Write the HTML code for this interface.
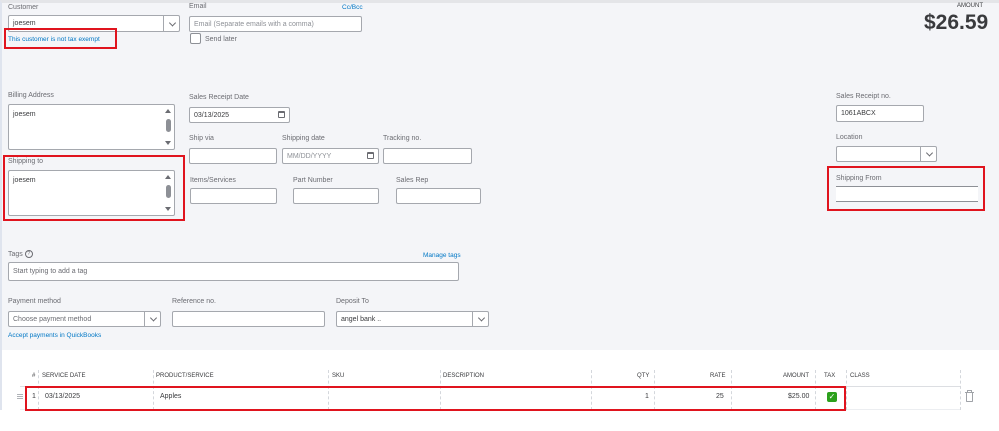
<!DOCTYPE html>
<html><head><meta charset="utf-8"><style>
*{box-sizing:border-box;margin:0;padding:0}
body{width:999px;height:431px;background:#fff;font-family:"Liberation Sans",sans-serif;position:relative;overflow:hidden;color:#393a3d}
.bg{position:absolute;left:0;top:0;width:999px;height:350px;background:#f4f5f8;border-top:3px solid #e4e5e8;border-left:2px solid #dfe4ee}
.a{position:absolute}
.l{position:absolute;font-size:7px;color:#6b6c72;white-space:nowrap}
.i{position:absolute;background:#fff;border:1px solid #a5a8ae;border-radius:2px;font-size:7px;color:#393a3d;padding:0 4px;display:flex;align-items:center}
.ph{color:#8d9096}
.sel::after{content:"";position:absolute;right:0;top:0;bottom:0;width:15px;border-left:1px solid #a5a8ae}
.chev{position:absolute;right:4px;top:50%;width:5px;height:5px;border-right:1px solid #6b6c72;border-bottom:1px solid #6b6c72;transform:translateY(-70%) rotate(45deg)}
.red{position:absolute;border:2px solid #e0141e}
.link{position:absolute;font-size:6.5px;color:#0077c5;white-space:nowrap}
.ta{position:absolute;background:#fff;border:1px solid #a5a8ae;border-radius:2px;font-size:7px;padding:6px 4px}
.sb{position:absolute;right:3px;width:5px;height:13px;background:#8d9096;border-radius:3px}
.up,.dn{position:absolute;right:3px;width:0;height:0;border-left:3px solid transparent;border-right:3px solid transparent}
.up{top:4px;border-bottom:4px solid #6b6c72}.dn{bottom:4px;border-top:4px solid #6b6c72}
.cal{position:absolute;right:4px;top:3px;width:7px;height:7px;border:1px solid #6b6c72;border-top-width:2px;border-radius:1px}
.th{position:absolute;top:373px;font-size:6px;color:#393a3d;white-space:nowrap}
.td{position:absolute;top:393px;font-size:7px;white-space:nowrap}
.vd{position:absolute;width:0;border-left:1px dashed #d4d7dc}
</style></head><body>
<div class="bg"></div>

<div class="l" style="left:8px;top:4px">Customer</div>
<div class="i sel" style="left:8px;top:15px;width:172px;height:17px">joesem<span class="chev"></span></div>
<div class="red" style="left:4px;top:28px;width:113px;height:21px"></div>
<div class="link" style="left:8px;top:36px">This customer is not tax exempt</div>

<div class="l" style="left:189px;top:3px">Email</div>
<div class="link" style="left:342px;top:4px">Cc/Bcc</div>
<div class="i" style="left:189px;top:16px;width:173px;height:16px"><span class="ph">Email (Separate emails with a comma)</span></div>
<div class="a" style="left:190px;top:33px;width:11px;height:11px;border:1px solid #8d9096;border-radius:2px;background:#fff"></div>
<div class="l" style="left:205px;top:36px">Send later</div>

<div class="a" style="left:957px;top:3px;font-size:6px;color:#393a3d">AMOUNT</div>
<div class="a" style="left:924px;top:11px;font-size:21px;font-weight:bold;color:#393a3d">$26.59</div>

<div class="l" style="left:8px;top:92px">Billing Address</div>
<div class="ta" style="left:8px;top:104px;width:167px;height:46px">joesem<span class="up"></span><span class="sb" style="top:14px"></span><span class="dn"></span></div>

<div class="red" style="left:3px;top:155px;width:182px;height:66px"></div>
<div class="l" style="left:8px;top:158px">Shipping to</div>
<div class="ta" style="left:8px;top:170px;width:167px;height:46px">joesem<span class="up"></span><span class="sb" style="top:14px"></span><span class="dn"></span></div>

<div class="l" style="left:189px;top:94px">Sales Receipt Date</div>
<div class="i" style="left:189px;top:107px;width:101px;height:16px">03/13/2025<span class="cal"></span></div>

<div class="l" style="left:189px;top:135px">Ship via</div>
<div class="i" style="left:189px;top:148px;width:88px;height:16px"></div>
<div class="l" style="left:282px;top:135px">Shipping date</div>
<div class="i" style="left:282px;top:148px;width:97px;height:16px"><span class="ph">MM/DD/YYYY</span><span class="cal"></span></div>
<div class="l" style="left:383px;top:135px">Tracking no.</div>
<div class="i" style="left:383px;top:148px;width:89px;height:16px"></div>

<div class="l" style="left:190px;top:177px">Items/Services</div>
<div class="i" style="left:190px;top:188px;width:87px;height:16px"></div>
<div class="l" style="left:293px;top:177px">Part Number</div>
<div class="i" style="left:293px;top:188px;width:86px;height:16px"></div>
<div class="l" style="left:396px;top:177px">Sales Rep</div>
<div class="i" style="left:396px;top:188px;width:85px;height:16px"></div>

<div class="l" style="left:836px;top:93px">Sales Receipt no.</div>
<div class="i" style="left:836px;top:105px;width:88px;height:17px">1061ABCX</div>
<div class="l" style="left:836px;top:134px">Location</div>
<div class="i sel" style="left:836px;top:146px;width:101px;height:16px"><span class="chev"></span></div>
<div class="red" style="left:827px;top:166px;width:158px;height:45px"></div>
<div class="l" style="left:836px;top:175px">Shipping From</div>
<div class="a" style="left:836px;top:186px;width:142px;height:16px;background:#fff;border-top:1px solid #8d9096;border-bottom:1px solid #8d9096"></div>

<div class="l" style="left:8px;top:250px">Tags <span style="display:inline-block;width:8px;height:8px;border:1px solid #6b6c72;border-radius:50%;font-size:5px;text-align:center;line-height:6px;vertical-align:middle">?</span></div>
<div class="link" style="left:423px;top:252px">Manage tags</div>
<div class="i" style="left:8px;top:262px;width:451px;height:19px"><span class="ph" style="color:#6b6c72">Start typing to add a tag</span></div>

<div class="l" style="left:8px;top:298px">Payment method</div>
<div class="i sel" style="left:8px;top:311px;width:153px;height:16px"><span style="color:#6b6c72">Choose payment method</span><span class="chev"></span></div>
<div class="l" style="left:172px;top:298px">Reference no.</div>
<div class="i" style="left:172px;top:311px;width:153px;height:16px"></div>
<div class="l" style="left:336px;top:298px">Deposit To</div>
<div class="i sel" style="left:336px;top:311px;width:153px;height:16px">angel bank ..<span class="chev"></span></div>
<div class="link" style="left:8px;top:332px">Accept payments in QuickBooks</div>

<div class="a" style="left:0;top:350px;width:2px;height:60px;background:#dfe4ee"></div>
<div class="a" style="left:20px;top:386px;width:940px;height:0;border-top:1px solid #dcdee2"></div>
<div class="a" style="left:20px;top:409px;width:940px;height:0;border-top:1px solid #eceef1"></div>
<div class="vd" style="left:38px;top:370px;height:40px"></div>
<div class="vd" style="left:153px;top:370px;height:40px"></div>
<div class="vd" style="left:328px;top:370px;height:40px"></div>
<div class="vd" style="left:440px;top:370px;height:40px"></div>
<div class="vd" style="left:591px;top:370px;height:40px"></div>
<div class="vd" style="left:654px;top:370px;height:40px"></div>
<div class="vd" style="left:731px;top:370px;height:40px"></div>
<div class="vd" style="left:815px;top:370px;height:40px"></div>
<div class="vd" style="left:846px;top:370px;height:40px"></div>
<div class="vd" style="left:960px;top:370px;height:40px"></div>
<div class="th" style="left:32px">#</div>
<div class="th" style="left:42px">SERVICE DATE</div>
<div class="th" style="left:156px">PRODUCT/SERVICE</div>
<div class="th" style="left:332px">SKU</div>
<div class="th" style="left:443px">DESCRIPTION</div>
<div class="th" style="left:637px">QTY</div>
<div class="th" style="left:710px">RATE</div>
<div class="th" style="left:783px">AMOUNT</div>
<div class="th" style="left:824px">TAX</div>
<div class="th" style="left:850px">CLASS</div>
<div class="a" style="left:17px;top:394px;width:6px;height:5px;border-top:1px solid #b0b3b8;border-bottom:1px solid #b0b3b8"></div>
<div class="a" style="left:17px;top:396px;width:6px;height:0;border-top:1px solid #b0b3b8"></div>
<div class="td" style="left:32px">1</div>
<div class="td" style="left:45px">03/13/2025</div>
<div class="td" style="left:160px">Apples</div>
<div class="td" style="left:645px">1</div>
<div class="td" style="left:716px">25</div>
<div class="td" style="left:788px">$25.00</div>
<div class="a" style="left:827px;top:392px;width:10px;height:10px;background:#2ca01c;border-radius:2px;color:#fff;font-size:8px;line-height:10px;text-align:center">✓</div>
<div class="a" style="left:967px;top:390px;width:5px;height:2px;border:1px solid #a0a3a8;border-bottom:none"></div>
<div class="a" style="left:965px;top:392px;width:9px;height:0;border-top:1px solid #a0a3a8"></div>
<div class="a" style="left:966px;top:393px;width:7px;height:9px;border:1px solid #a0a3a8;border-top:none;border-radius:0 0 1px 1px"></div>
<div class="red" style="left:25px;top:386px;width:821px;height:25px"></div>
</body></html>
